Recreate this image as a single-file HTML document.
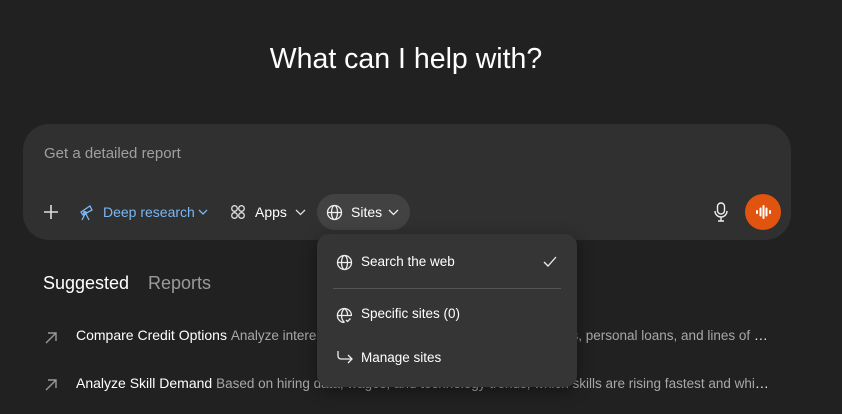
<!DOCTYPE html><html><head><style>
body{margin:0;width:842px;height:414px;background:#212121;font-family:"Liberation Sans",sans-serif;overflow:hidden;position:relative;color:#ececec}
.a{position:absolute}
h1{position:absolute;left:0;width:812px;top:43px;margin:0;text-align:center;font-weight:400;font-size:28.5px;color:#fff}
.box{left:23px;top:124px;width:768px;height:116px;background:#303030;border-radius:26px}
svg{position:absolute}
.t{font-size:14px;white-space:nowrap}
.menu{left:317px;top:234px;width:260px;height:153px;background:#353535;border-radius:12px;box-shadow:0 4px 16px rgba(0,0,0,.4)}
.sug{font-size:14px;white-space:nowrap;width:696px;overflow:hidden;text-overflow:ellipsis}
.sug b{font-weight:400;color:#fff}
.sug span{color:#a8a8a8;font-size:13.5px}
</style></head><body>
<h1>What can I help with?</h1>
<div class="a box"></div>
<div class="a t" style="left:44px;top:145px;font-size:15px;color:#a0a0a0">Get a detailed report</div>
<svg style="left:43px;top:204px" width="16" height="16"><path d="M8 1v14M1 8h14" stroke="#ddd" stroke-width="1.6"/></svg>
<svg style="left:78px;top:203px" width="18" height="18" fill="none" stroke="#7ab7f5" stroke-width="1.3"><path d="M3 9l9-6 2 4-9 5zM7 11l-3 6M8 11l3 6M6 8l2 3"/><circle cx="7" cy="10" r="1.3"/></svg>
<div class="a t" style="left:103px;top:204px;color:#7ab7f5">Deep research</div>
<svg style="left:198px;top:209px" width="10" height="7"><path d="M1 1l4 4 4-4" stroke="#7ab7f5" fill="none" stroke-width="1.3"/></svg>
<svg style="left:230px;top:204px" width="16" height="16" fill="none" stroke="#ddd" stroke-width="1.3"><circle cx="4.5" cy="4.5" r="2.8"/><circle cx="11.5" cy="4.5" r="2.8"/><circle cx="4.5" cy="11.5" r="2.8"/><circle cx="11.5" cy="11.5" r="2.8"/></svg>
<div class="a t" style="left:255px;top:204px;color:#fff">Apps</div>
<svg style="left:295px;top:209px" width="11" height="7"><path d="M1 1l4.5 4.5L10 1" stroke="#ddd" fill="none" stroke-width="1.3"/></svg>
<div class="a" style="left:317px;top:194px;width:93px;height:36px;background:#424242;border-radius:18px"></div>
<svg style="left:326px;top:204px" width="17" height="17" fill="none" stroke="#eee" stroke-width="1.3"><circle cx="8.5" cy="8.5" r="7"/><ellipse cx="8.5" cy="8.5" rx="3" ry="7"/><path d="M1.5 8.5h14"/></svg>
<div class="a t" style="left:351px;top:204px;color:#fff">Sites</div>
<svg style="left:388px;top:209px" width="11" height="7"><path d="M1 1l4.5 4.5L10 1" stroke="#eee" fill="none" stroke-width="1.3"/></svg>
<svg style="left:713px;top:202px" width="16" height="20" fill="none" stroke="#eee" stroke-width="1.4"><rect x="4.5" y="1" width="7" height="11" rx="3.5"/><path d="M2 9a6 6 0 0 0 12 0M8 15v4M5 19h6"/></svg>
<div class="a" style="left:745px;top:194px;width:36px;height:36px;border-radius:50%;background:#e0540f"></div>
<svg style="left:753px;top:202px" width="20" height="20" stroke="#fff" stroke-width="2" stroke-linecap="round"><path d="M4 9v2M7.5 6.5v7M10.5 4v12M13.5 6.5v7M17 9v2"/></svg>
<div class="a t" style="left:43px;top:273px;font-size:18px;color:#fff">Suggested</div>
<div class="a t" style="left:148px;top:273px;font-size:18px;color:#9a9a9a">Reports</div>
<svg style="left:44px;top:331px" width="14" height="14" stroke="#999" stroke-width="1.4" fill="none"><path d="M2 12L12 2M4 2h8v8"/></svg>
<div class="a sug" style="left:76px;top:327px"><b>Compare Credit Options</b> <span>Analyze interest rates, fees, and terms across credit cards, personal loans, and lines of credit to find the best</span></div>
<svg style="left:44px;top:378px" width="14" height="14" stroke="#999" stroke-width="1.4" fill="none"><path d="M2 12L12 2M4 2h8v8"/></svg>
<div class="a sug" style="left:76px;top:375px"><b>Analyze Skill Demand</b> <span>Based on hiring data, wages, and technology trends, which skills are rising fastest and which are declining</span></div>
<div class="a menu"></div>
<svg style="left:336px;top:254px" width="17" height="17" fill="none" stroke="#eee" stroke-width="1.3"><circle cx="8.5" cy="8.5" r="7"/><ellipse cx="8.5" cy="8.5" rx="3" ry="7"/><path d="M1.5 8.5h14"/></svg>
<div class="a t" style="left:361px;top:254px;font-size:13.5px;color:#fff">Search the web</div>
<svg style="left:543px;top:256px" width="14" height="12"><path d="M1 6l4 4 8-9" stroke="#eee" fill="none" stroke-width="1.3"/></svg>
<div class="a" style="left:333px;top:288px;width:228px;height:1px;background:#555"></div>
<svg style="left:336px;top:307px" width="17" height="17" fill="none" stroke="#eee" stroke-width="1.3"><path d="M15.4 9A7 7 0 1 0 8.5 15.5"/><path d="M8.5 1.5c-4 3.5-4 10.5 0 14M8.5 1.5c2.5 2 3.2 4.5 3 7M1.5 8.5h14M10 13l1.5 1.5 3-3"/></svg>
<div class="a t" style="left:361px;top:306px;font-size:13.5px;color:#fff">Specific sites (0)</div>
<svg style="left:336px;top:350px" width="18" height="15" fill="none" stroke="#eee" stroke-width="1.3"><path d="M2 1v5a3 3 0 0 0 3 3h11M12 5l4 4-4 4"/></svg>
<div class="a t" style="left:361px;top:350px;font-size:13.5px;color:#fff">Manage sites</div>
</body></html>
